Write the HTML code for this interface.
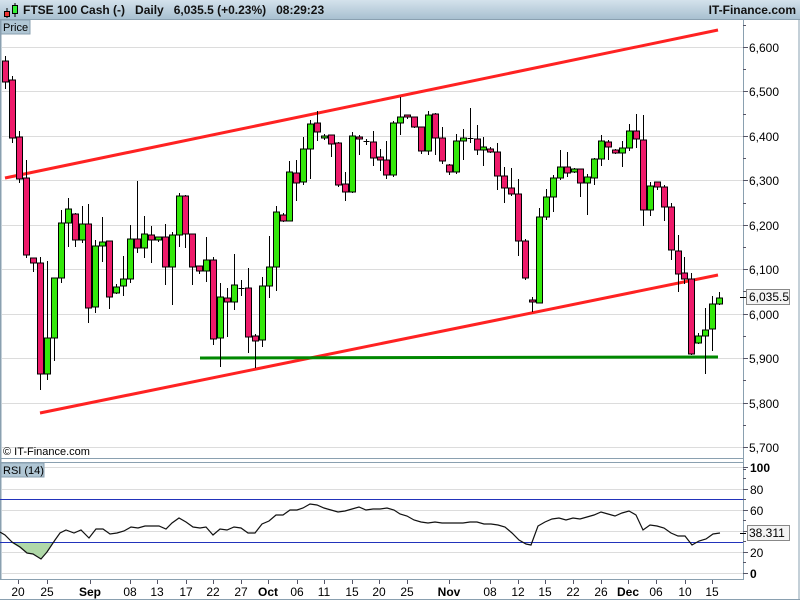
<!DOCTYPE html>
<html><head><meta charset="utf-8"><style>
html,body{margin:0;padding:0;width:800px;height:600px;overflow:hidden;background:#fff;font-family:"Liberation Sans",Arial,sans-serif}
#hdr{position:absolute;left:0;top:0;width:800px;height:20px;background:linear-gradient(#d4e2ec,#a8c0d0);border-bottom:1px solid #8aa0b0;box-sizing:border-box}
#hdr .t{position:absolute;left:23px;top:3px;font-size:12px;font-weight:bold;color:#111;white-space:pre}
#hdr .r{position:absolute;right:4px;top:3px;font-size:12px;font-weight:bold;color:#111}
</style></head><body>
<div id="hdr"><span class="t">FTSE 100 Cash (-)   Daily   6,035.5 (+0.23%)   08:29:23</span><span class="r">IT-Finance.com</span>
<svg style="position:absolute;left:3px;top:2px" width="16" height="16"><line x1="4" y1="6" x2="4" y2="16" stroke="#000"/><rect x="1.5" y="9.5" width="5" height="5" fill="#e33" stroke="#000"/><line x1="12" y1="1" x2="12" y2="15" stroke="#000"/><rect x="9.5" y="3.5" width="5" height="8" fill="#3e3" stroke="#000"/></svg>
</div>
<svg id="c" width="800" height="600" style="position:absolute;left:0;top:0" xmlns="http://www.w3.org/2000/svg" font-family="Liberation Sans, Arial, sans-serif"></svg>
<script>
var s='';
// panel frames
s+='<rect x="0" y="20" width="743" height="438" fill="#fff"/>';
s+='<line x1="0.5" y1="20" x2="0.5" y2="580" stroke="#8aa0b0" stroke-width="2"/>';
s+='<line x1="743.5" y1="20" x2="743.5" y2="580" stroke="#8aa0b0"/>';
s+='<line x1="0" y1="458.5" x2="743" y2="458.5" stroke="#8aa0b0"/>';
s+='<line x1="0" y1="462.5" x2="743" y2="462.5" stroke="#8aa0b0"/>';
s+='<line x1="0" y1="579.5" x2="743" y2="579.5" stroke="#8aa0b0"/>';
s+='<line x1="799" y1="20" x2="799" y2="600" stroke="#8aa0b0"/>';
s+='<line x1="0" y1="599.5" x2="800" y2="599.5" stroke="#8aa0b0"/>';
// price grid
var lv=[6600,6500,6400,6300,6200,6100,6000,5900,5800,5700];
lv.forEach(function(p){var y=47+(6600-p)*0.4444;y=Math.round(y)+0.5;
s+='<line x1="2" y1="'+y+'" x2="743" y2="'+y+'" stroke="#dcdcdc"/>';
s+='<line x1="743" y1="'+y+'" x2="748" y2="'+y+'" stroke="#556"/>';
var t=(p+'').replace(/(\d)(\d{3})$/,'$1,$2');
s+='<text x="749" y="'+(y+4.5)+'" font-size="12" fill="#000">'+t+'</text>';
});
for(var p=6650;p>=5650;p-=50){var y=Math.round(47+(6600-p)*0.4444)+0.5;s+='<line x1="743" y1="'+y+'" x2="746" y2="'+y+'" stroke="#556"/>';}
s+='<rect x="1" y="20" width="29" height="14" fill="#b0c6d4" stroke="#8aa0b0"/><text x="3" y="31" font-size="11">Price</text>';
s+='<text x="3" y="455" font-size="11">© IT-Finance.com</text>';
// trend lines
s+='<line x1="5" y1="178" x2="718" y2="30" stroke="#f22" stroke-width="3"/>';
s+='<line x1="40" y1="413" x2="718" y2="275" stroke="#f22" stroke-width="3"/>';
s+='<line x1="200" y1="358" x2="718" y2="357" stroke="#080" stroke-width="3"/>';
// candles: c, bt, bb, wt, wb
var d=[['r',61,82,56,89],['r',80,138,76,143],['r',137,179,131,183],['r',178,255,160,258],['r',258,263,258,272],['r',263,374,257,390],['g',338,374,261,380],['g',278,338,278,361],['g',223,278,210,283],['g',209,223,198,247],['r',214,240,213,247],['g',224,240,206,243],['r',224,308,204,323],['g',246,307,240,313],['g',242,246,217,262],['r',241,297,241,309],['g',287,293,284,294],['g',279,286,256,296],['g',239,279,225,283],['r',239,248,181,253],['g',234,248,216,258],['r',235,240,226,263],['g',237,240,237,242],['r',237,267,224,285],['g',235,267,232,305],['g',196,235,193,247],['r',196,234,195,248],['r',234,267,234,285],['r',266,271,266,274],['g',260,271,237,282],['r',260,339,257,345],['g',297,338,283,367],['r',298,302,288,337],['g',285,302,254,310],['x',288,288,280,296],['r',288,337,268,353],['r',336,341,334,368],['g',286,340,277,347],['g',267,286,236,298],['g',212,267,206,291],['r',215,221,213,222],['g',172,221,161,221],['r',173,183,160,201],['g',149,182,137,185],['g',124,149,120,179],['r',123,132,111,141],['g',136,138,134,140],['r',135,144,135,157],['r',143,185,142,187],['r',184,192,172,201],['g',136,192,132,193],['r',137,139,135,155],['x',141,141,139,145],['r',142,158,131,166],['r',157,160,149,171],['r',160,175,141,179],['g',123,175,121,177],['g',117,123,97,135],['r',115,117,115,119],['r',117,127,117,128],['r',127,151,127,154],['g',115,151,111,155],['r',114,138,113,155],['r',138,161,127,164],['r',165,172,164,175],['g',141,172,134,174],['g',138,141,129,160],['x',138,138,108,143],['r',139,150,125,155],['g',147,150,137,166],['r',149,152,147,153],['r',152,176,143,190],['r',176,188,167,203],['r',188,194,168,196],['r',194,241,179,256],['r',241,278,239,280],['r',300,302,297,312],['g',217,303,208,303],['g',197,217,189,220],['g',178,197,175,212],['g',167,178,150,180],['r',167,173,152,177],['g',169,172,168,173],['r',169,183,169,197],['g',177,183,174,215],['g',159,178,158,185],['g',141,159,135,166],['r',142,147,140,160],['r',150,153,149,154],['g',148,153,141,167],['g',131,148,124,151],['r',131,139,114,148],['r',140,210,115,226],['g',186,210,182,216],['r',182,187,182,190],['r',187,207,185,221],['r',207,250,203,260],['r',251,274,235,292],['r',273,279,257,284],['r',279,354,273,355],['g',336,343,333,344],['g',330,336,308,374],['g',304,329,296,351],['g',298,304,292,305]];
d.forEach(function(c,i){var x=Math.round(5.3+6.93*i)+0.5;
s+='<line x1="'+x+'" y1="'+c[3]+'" x2="'+x+'" y2="'+c[4]+'" stroke="#000"/>';
if(c[0]=='x'){s+='<line x1="'+(x-3)+'" y1="'+c[1]+'.5" x2="'+(x+3)+'" y2="'+c[1]+'.5" stroke="#000"/>';}
else{var h=Math.max(c[2]-c[1],2);s+='<rect x="'+(x-3)+'" y="'+c[1]+'" width="6" height="'+h+'" fill="'+(c[0]=='r'?'#ee1a6a':'#33e80a')+'" stroke="#000"/>';}
});
// current price label
s+='<line x1="740" y1="297.5" x2="746" y2="297.5" stroke="#000"/>';
s+='<rect x="746.5" y="289.5" width="43" height="15" fill="#f4f4f4" stroke="#888"/><text x="749" y="301" font-size="12">6,035.5</text>';
// RSI panel
[[100,467],[80,489],[60,510],[40,531],[20,552],[0,573]].forEach(function(a){var y=a[1]+0.5;
s+='<line x1="2" y1="'+y+'" x2="743" y2="'+y+'" stroke="#dcdcdc"/><line x1="743" y1="'+y+'" x2="748" y2="'+y+'" stroke="#556"/>';
if(a[0]!=40)s+='<text x="750" y="'+(y+4.5)+'" font-size="12"'+(a[0]==100||a[0]==0?' font-weight="bold"':'')+'>'+a[0]+'</text>';});
for(var v=10;v<100;v+=20){var y=Math.round(573-v*1.06)+0.5;s+='<line x1="743" y1="'+y+'" x2="746" y2="'+y+'" stroke="#556"/>';}
s+='<rect x="1" y="463" width="43" height="14" fill="#b0c6d4" stroke="#8aa0b0"/><text x="3" y="474" font-size="11">RSI (14)</text>';
s+='<polygon points="10,542 20,548 27,553 33,554 41,559 47,552 53,542" fill="#b0d8a8"/>';
s+='<line x1="0" y1="499.5" x2="743" y2="499.5" stroke="#2233bb"/><line x1="0" y1="542.5" x2="743" y2="542.5" stroke="#2233bb"/>';
var r=[[0,532],[5,535],[12,542],[20,547],[27,553],[33,554],[41,559],[47,552],[55,540],[60,533],[66,530],[74,533],[81,530],[89,538],[96,529],[103,529],[110,534],[117,533],[124,531],[131,527],[138,528],[145,526],[152,526],[159,526],[166,529],[172,523],[179,518],[186,522],[193,527],[200,528],[206,527],[213,535],[220,529],[227,530],[234,527],[241,528],[248,533],[255,533],[262,524],[269,521],[276,515],[283,515],[290,510],[297,510],[303,508],[310,504],[317,505],[324,508],[331,510],[338,512],[345,511],[352,509],[359,507],[366,510],[373,509],[380,509],[387,508],[394,510],[400,514],[407,516],[414,520],[421,522],[428,523],[435,522],[442,523],[449,523],[456,523],[463,523],[470,522],[477,522],[484,524],[491,524],[498,525],[505,527],[512,533],[519,540],[526,544],[531,545],[538,526],[545,522],[552,519],[559,518],[566,520],[573,518],[580,519],[587,517],[594,515],[601,512],[608,514],[615,516],[622,513],[629,511],[636,515],[643,530],[650,525],[657,526],[664,528],[671,533],[678,536],[685,536],[692,545],[699,541],[706,539],[713,534],[720,533]];
s+='<polyline points="'+r.map(function(p){return p.join(',')}).join(' ')+'" fill="none" stroke="#111" stroke-width="1.2"/>';
s+='<line x1="740" y1="533.5" x2="746" y2="533.5" stroke="#000"/><rect x="747.5" y="525.5" width="42" height="15" fill="#f4f4f4" stroke="#888"/><text x="749" y="537" font-size="12">38.311</text>';
// x axis
var xl=[['20',18],['25',47],['Sep',90,1],['08',130],['13',157],['17',186],['22',213],['27',241],['Oct',268,1],['06',297],['11',324],['15',352],['20',379],['25',407],['Nov',449,1],['08',490],['12',518],['15',545],['22',573],['26',601],['Dec',628,1],['06',656],['10',685],['15',712]];
xl.forEach(function(a){s+='<line x1="'+(a[1]+0.5)+'" y1="580" x2="'+(a[1]+0.5)+'" y2="584" stroke="#556"/><text x="'+a[1]+'" y="596" font-size="12" text-anchor="middle"'+(a[2]?' font-weight="bold"':'')+'>'+a[0]+'</text>';});
document.getElementById('c').innerHTML=s;
</script>
</body></html>
